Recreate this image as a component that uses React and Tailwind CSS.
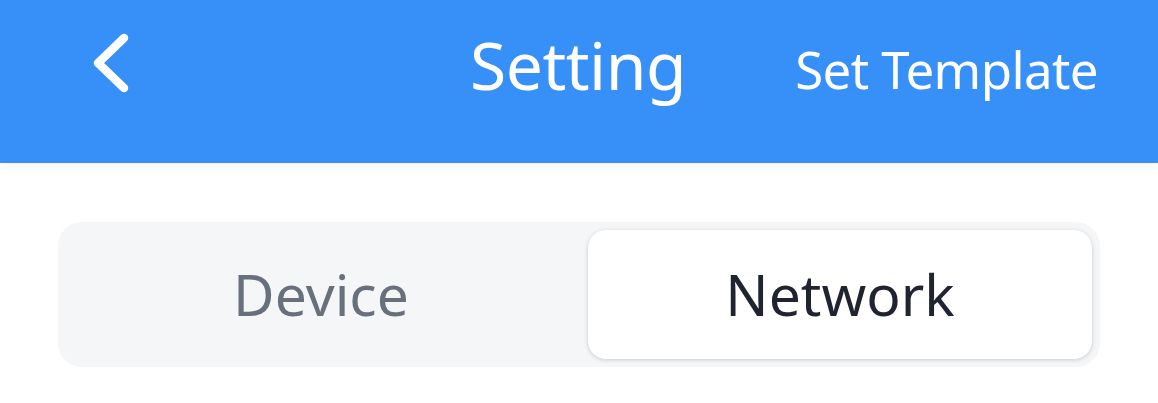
export default function App() {
  return (
    <div className="w-[1158px] h-[403px] bg-white overflow-hidden" style={{ fontFamily: '"Noto Sans", "Open Sans", sans-serif' }}>
      <header className="relative h-[163px] bg-[#3790f8] flex items-center text-white shadow-[0_4px_10px_rgba(0,0,0,0.04)]">
        <button className="ml-[90px] mb-[38px] w-[42px] h-[62px] flex items-center justify-center">
          <svg width="42" height="62" viewBox="0 0 42 62" fill="none" stroke="currentColor" strokeWidth="8.5" strokeLinecap="round" strokeLinejoin="round">
            <path d="M34 6 L8 31 L34 56" />
          </svg>
        </button>
        <h1 className="absolute left-[470px] top-[24px] text-[66px] leading-[80px] font-normal tracking-[-0.5px]">Setting</h1>
        <span className="ml-auto mr-[60px] mb-[24px] text-[51px] leading-none tracking-[-0.6px]">Set Template</span>
      </header>

      <main className="px-[58px] pt-[59px]">
        <div className="flex gap-[12px] h-[145px] p-[8px] rounded-[24px] bg-[#f5f6f8]">
          <button className="flex-1 flex items-center justify-center text-[57px] text-[#68707c]">Device</button>
          <button className="w-[504px] flex items-center justify-center rounded-[18px] bg-white text-[57px] text-[#1f2430] shadow-[0_1px_4px_rgba(0,0,0,0.18)]">Network</button>
        </div>
      </main>
    </div>
  )
}
